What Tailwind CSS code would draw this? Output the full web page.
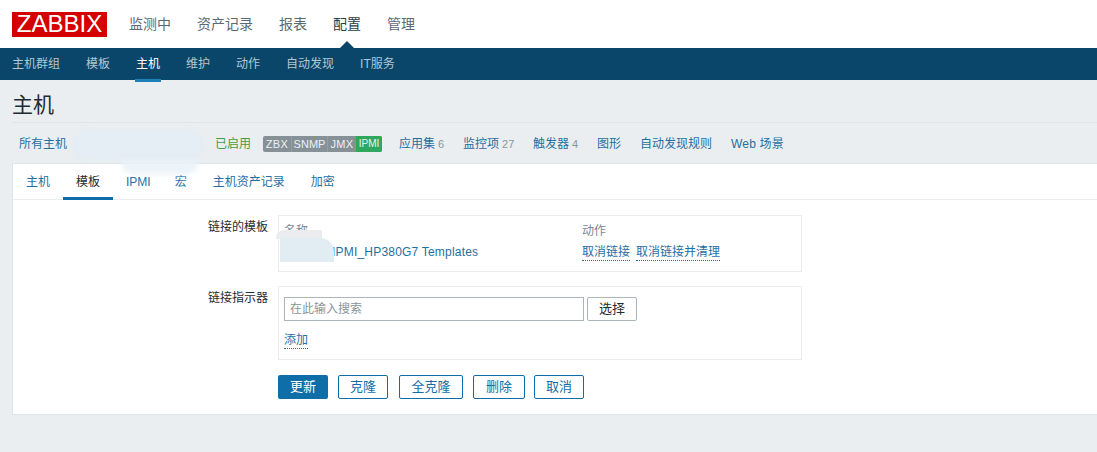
<!DOCTYPE html>
<html lang="zh-CN">
<head>
    <meta charset="UTF-8">
    <title>主机 - Zabbix</title>
    <script src="https://cdn.jsdelivr.net/npm/@tailwindcss/browser@4"></script>
</head>
<body class="relative h-[452px] w-[1097px] overflow-hidden bg-[#ebeef0] font-['Liberation_Sans','Noto_Sans_CJK_SC',sans-serif] text-xs text-[#1f2c33]">
    <!-- top menu -->
    <header class="flex h-12 items-center bg-white pl-3">
        <div class="flex h-[25px] w-[95px] items-center justify-center bg-[#d40000] text-[24px] leading-none text-white">ZABBIX</div>
        <nav class="ml-[22px] flex gap-[26px] text-sm text-[#5b6a73]">
            <a>监测中</a>
            <a>资产记录</a>
            <a>报表</a>
            <a class="relative text-[#2f3d45]">配置<span class="absolute left-[7px] top-[27px] h-0 w-0 border-x-[7px] border-b-[7px] border-x-transparent border-b-[#0a466a]"></span></a>
            <a>管理</a>
        </nav>
    </header>
    <nav class="flex h-8 items-center gap-[26px] bg-[#0a466a] pl-3 text-[#b4c7d3]">
        <a>主机群组</a>
        <a>模板</a>
        <a class="relative text-white">主机<span class="absolute -inset-x-px top-[23px] h-[3px] bg-[#1f7fb8]"></span></a>
        <a>维护</a>
        <a>动作</a>
        <a>自动发现</a>
        <a>IT服务</a>
    </nav>

    <main class="pl-3">
        <h1 class="flex h-[43px] items-center border-b border-[#dfe4e7] pt-[8px] text-[21px] font-normal text-[#1f2c33]">主机</h1>
        <div class="flex h-[40px] items-center pl-[7px] pt-[1px] text-[#1f6fa3]">
            <a class="w-[196px]">所有主机</a>
            <span class="w-[48px] text-[#429e47]">已启用</span>
            <div class="flex h-4 w-[119px] overflow-hidden rounded-[2px] bg-[#859097] text-[11px] leading-4 text-[#eef0f1]">
                <span class="w-[29px] border-r border-[#939da3] text-center tracking-[0.3px]">ZBX</span>
                <span class="w-[36px] border-r border-[#939da3] text-center">SNMP</span>
                <span class="w-[28px] text-center tracking-[0.4px]">JMX</span>
                <span class="w-[26px] bg-[#2fa85f] text-center text-[10px]">IPMI</span>
            </div>
            <a class="ml-[17px] w-[64px]">应用集<span class="ml-[3px] text-[11px] text-[#8a959b]">6</span></a>
            <a class="w-[70px]">监控项<span class="ml-[3px] text-[11px] text-[#8a959b]">27</span></a>
            <a class="w-[64px]">触发器<span class="ml-[3px] text-[11px] text-[#8a959b]">4</span></a>
            <a class="w-[43px]">图形</a>
            <a class="w-[91px]">自动发现规则</a>
            <a class="tracking-[0.2px]">Web 场景</a>
        </div>

        <section class="h-[252px] border-y border-l border-[#dfe4e7] bg-white">
            <div class="flex h-[36px] border-b border-[#ebeef0] text-[#1f6fa3]">
                <a class="flex w-[50px] items-center justify-center">主机</a>
                <a class="relative flex w-[50px] items-center justify-center text-[#1f2c33]">模板<span class="absolute inset-x-0 bottom-[-1px] h-[3px] bg-[#0f6ea8]"></span></a>
                <a class="ml-[13px] flex items-center">IPMI</a>
                <a class="ml-[24px] flex items-center">宏</a>
                <a class="ml-[26px] flex items-center">主机资产记录</a>
                <a class="ml-[26px] flex items-center">加密</a>
            </div>

            <form class="flex flex-col pt-[15px]">
                <div class="flex">
                    <label class="w-[265px] pt-[4px] pr-[10px] text-right">链接的模板</label>
                    <div class="h-[57px] w-[524px] border border-[#ebeef0] px-[5px] pt-[7px]">
                        <div class="flex text-[#7b878e]">
                            <span class="w-[298px]">名称</span>
                            <span>动作</span>
                        </div>
                        <div class="mt-[5px] flex text-[#1f6fa3]">
                            <a class="w-[298px] pl-[48px] tracking-[0.2px]">IPMI_HP380G7 Templates</a>
                            <a class="border-b border-dotted border-[#1f6fa3]">取消链接</a>
                            <a class="ml-[6px] border-b border-dotted border-[#1f6fa3]">取消链接并清理</a>
                        </div>
                    </div>
                </div>
                <div class="mt-[14px] flex">
                    <label class="w-[265px] pt-[4px] pr-[10px] text-right">链接指示器</label>
                    <div class="h-[74px] w-[524px] border border-[#ebeef0] px-[5px] pt-[10px]">
                        <div class="flex gap-[3px]">
                            <input class="h-6 w-[300px] border border-[#acb5ba] px-[5px] text-xs placeholder:text-[#8a959b]" placeholder="在此输入搜索">
                            <button type="button" class="h-6 w-[50px] rounded-[2px] border border-[#acb5ba] text-[13px]">选择</button>
                        </div>
                        <a class="mt-[11px] inline-block border-b border-dotted border-[#1f6fa3] text-[#1f6fa3]">添加</a>
                    </div>
                </div>
                <div class="mt-[15px] flex pl-[265px] text-[13px] text-[#0f6ea8]">
                    <button type="button" class="h-6 w-[50px] rounded-[2px] bg-[#0f6ea8] text-white">更新</button>
                    <button type="button" class="ml-[10px] h-6 w-[50px] rounded-[2px] border border-[#0f6ea8]">克隆</button>
                    <button type="button" class="ml-[11px] h-6 w-[64px] rounded-[2px] border border-[#0f6ea8]">全克隆</button>
                    <button type="button" class="ml-[10px] h-6 w-[52px] rounded-[2px] border border-[#0f6ea8]">删除</button>
                    <button type="button" class="ml-[9px] h-6 w-[50px] rounded-[2px] border border-[#0f6ea8]">取消</button>
                </div>
            </form>
        </section>
    </main>

    <!-- painted-over patches in the screenshot -->
    <div class="absolute left-[72px] top-[129px] h-[32px] w-[132px] rounded-[16px] bg-[#e3edf4]/90 blur-[2px]"></div>
    <div class="absolute left-[120px] top-[158px] h-[17px] w-[80px] rounded-b-[16px] bg-[#e8f1f7]/80 blur-[2px]"></div>
    <div class="absolute left-[276px] top-[230px] h-[9px] w-[46px] rounded-tl-[8px] bg-[#ebeced]"></div>
    <div class="absolute left-[280px] top-[238px] h-[24px] w-[54px] rounded-tr-[14px] bg-[#e2ecf3]"></div>
</body>
</html>
